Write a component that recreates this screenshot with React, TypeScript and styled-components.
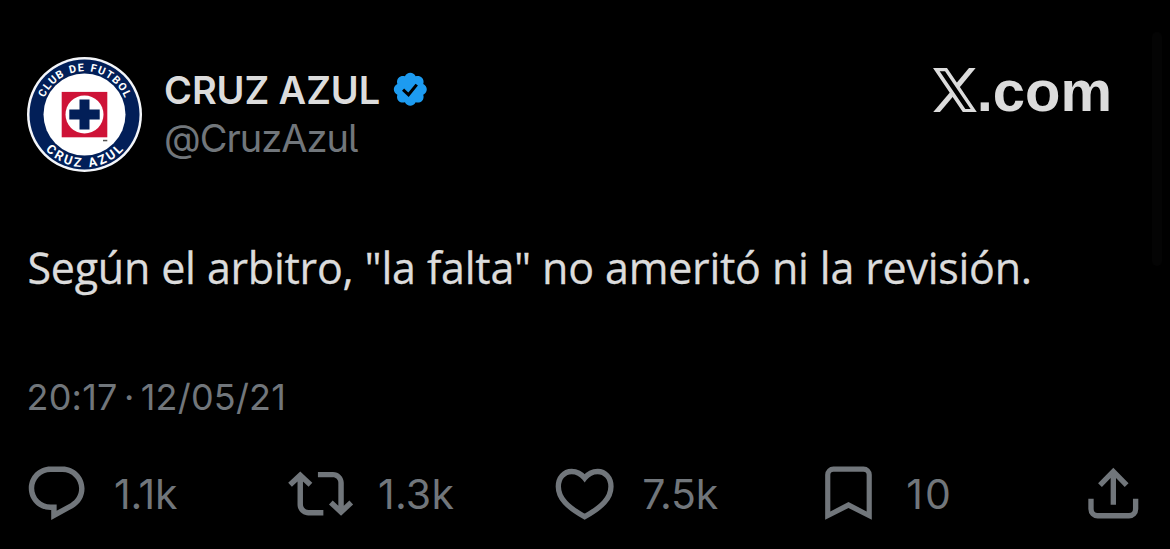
import React from "react";
import styled, { createGlobalStyle } from "styled-components";

const GlobalStyle = createGlobalStyle`
  body { margin: 0; background: #000; }
  * { box-sizing: border-box; }
`;

const Page = styled.main`
  width: 1170px;
  height: 549px;
  display: flex;
  background: #000;
  overflow: hidden;
  font-family: Inter, "Liberation Sans", sans-serif;
`;

const Post = styled.article`
  width: 1152px;
  display: flex;
  flex-direction: column;
  padding-top: 57px;
`;

const ScrollThumb = styled.div`
  width: 10px;
  height: 234px;
  margin-top: 32px;
  border-radius: 5px;
  background: #040404;
`;

const Header = styled.header`
  display: flex;
  height: 115px;
  padding-left: 27px;
  padding-right: 40px;
`;

const Identity = styled.div`
  display: flex;
  flex-direction: column;
  margin-left: 22px;
  padding-top: 9px;
  flex: 1;
`;

const NameRow = styled.div`
  display: flex;
  align-items: center;
  height: 48px;
`;

const Line = styled.span<{ $size: number; $color: string; $weight?: number; $spacing?: number }>`
  font-size: ${(p) => p.$size}px;
  line-height: 48px;
  font-weight: ${(p) => p.$weight ?? 400};
  letter-spacing: ${(p) => p.$spacing ?? 0}px;
  color: ${(p) => p.$color};
  white-space: nowrap;
`;

const Handle = styled(Line)`
  font-feature-settings: "cv05";
`;

const StampText = styled(Line)`
  word-spacing: -4px;
`;

const Brand = styled.div`
  display: flex;
  align-items: flex-start;
  padding-top: 10.5px;
`;

const BrandText = styled.span`
  font: 700 58px/64px "Liberation Sans", sans-serif;
  color: #dcdcdc;
  margin-top: -9px;
`;

const Message = styled.p`
  margin: 66px 0 0 27.5px;
  height: 60px;
  font: 400 43px/60px "Open Sans", sans-serif;
  letter-spacing: -0.26px;
  word-spacing: 0.3px;
  -webkit-text-stroke: 0.3px #dcdcdc;
  color: #dcdcdc;
  white-space: nowrap;
`;

const Stamp = styled.div`
  margin: 75px 0 0 26.5px;
  height: 48px;
  display: flex;
`;

const Actions = styled.footer`
  display: grid;
  grid-template-columns: repeat(4, 264.1px) 65.3px;
  margin: 40px 0 0 24.2px;
  color: #71767b;
`;

const Action = styled.div`
  display: flex;
  align-items: center;
  height: 65.3px;
  gap: 24.500px;
`;

const Glyph = styled.svg`
  width: 65.3px;
  height: 65.3px;
  flex: none;
  display: block;
`;

function Crest() {
  return (
    <svg width="115" height="115" viewBox="-57.5 -57.5 115 115">
      <circle r="57.5" fill="#f4f6fa" />
      <circle r="55" fill="#021f58" />
      <circle r="41" fill="#fff" />
      <rect x="-22.8" y="-22.6" width="45.6" height="45.4" fill="#ce1337" />
      <circle r="19" fill="#fff" />
      <path d="M-5-15H5V-5H15.2V5H5V15H-5V5H-15.2V-5H-5Z" fill="#021f58" />
      <rect x="18.5" y="25.3" width="4.3" height="1.5" fill="#555" />
      <path id="arcTop" d="M-43.4 0A43.4 43.4 0 0 1 43.4 0" fill="none" />
      <path id="arcBottom" d="M-52.6 0A52.6 52.6 0 0 0 52.6 0" fill="none" />
      <g fill="#fff" fontFamily="Roboto, 'Liberation Sans', sans-serif" fontWeight="700" textAnchor="middle">
        <text fontSize="10.8" letterSpacing="1.15" wordSpacing="1">
          <textPath href="#arcTop" startOffset="50.5%">CLUB DE FUTBOL</textPath>
        </text>
        <text fontSize="12.8" letterSpacing="2.5">
          <textPath href="#arcBottom" startOffset="50.8%">CRUZ AZUL</textPath>
        </text>
      </g>
    </svg>
  );
}

const BadgeSvg = styled.svg`
  margin: -1px 0 0 10.5px;
  flex: none;
`;

function Verified() {
  return (
    <BadgeSvg width="38.6" height="38.6" viewBox="0 0 24 24">
      <path
        fill="#1d9bf0"
        d="M22.25 12c0-1.43-.88-2.67-2.19-3.34.46-1.39.2-2.9-.81-3.91s-2.52-1.27-3.91-.81c-.66-1.31-1.91-2.19-3.34-2.19s-2.67.88-3.33 2.19c-1.4-.46-2.91-.2-3.92.81s-1.26 2.52-.8 3.91c-1.31.67-2.2 1.91-2.2 3.34s.89 2.67 2.2 3.34c-.46 1.39-.21 2.9.8 3.91s2.52 1.26 3.91.81c.67 1.31 1.91 2.19 3.34 2.19s2.68-.88 3.34-2.19c1.39.45 2.9.2 3.91-.81s1.27-2.52.81-3.91c1.31-.67 2.19-1.91 2.19-3.34z"
      />
      <path d="M7.5 12.2l3.4 3.2 5.1-6.3" fill="none" stroke="#000" strokeWidth="1.9" />
    </BadgeSvg>
  );
}

const XMark = () => (
  <svg width="44" height="44.3" viewBox="0 0 132 133" fill="#dcdcdc">
    <path fillRule="evenodd" d="M0 0H42L132 133H90ZM20 10L97 123H113L36 10Z" />
    <path d="M108 0H128L79 59L70 46Z" />
    <path d="M0 133H20L64 81L55 68Z" />
  </svg>
);

const ReplyIcon = () => (
  <Glyph viewBox="0 0 24 24" fill="currentColor">
    <path d="M1.751 10c0-4.42 3.584-8 8.005-8h4.366c4.49 0 8.129 3.64 8.129 8.13 0 2.96-1.607 5.68-4.196 7.11l-8.054 4.46v-3.69h-.067c-4.49.1-8.183-3.51-8.183-8.01zm8.005-6c-3.317 0-6.005 2.69-6.005 6 0 3.37 2.77 6.08 6.138 6.01l.351-.01h1.761v2.3l5.087-2.81c1.951-1.08 3.163-3.13 3.163-5.36 0-3.39-2.744-6.13-6.129-6.13H9.756z" />
  </Glyph>
);

const RepostIcon = () => (
  <Glyph viewBox="0 0 24 24" fill="currentColor">
    <path d="M4.5 3.88l4.432 4.14-1.364 1.46L5.5 7.55V16c0 1.1.896 2 2 2H13v2H7.5c-2.209 0-4-1.79-4-4V7.55L1.432 9.48.068 8.02 4.5 3.88zM16.5 6H11V4h5.5c2.209 0 4 1.79 4 4v8.45l2.068-1.93 1.364 1.46-4.432 4.14-4.432-4.14 1.364-1.46 2.068 1.93V8c0-1.1-.896-2-2-2z" />
  </Glyph>
);

const LikeIcon = () => (
  <Glyph viewBox="547 18.6 196 196" fill="none" stroke="currentColor" strokeWidth="16">
    <path d="M645 70C634 56 620 50 606 50C583 50 566 69 566 95C566 131 594 157 645 186C696 157 724 131 724 95C724 69 707 50 684 50C670 50 656 56 645 70Z" />
  </Glyph>
);

const SaveIcon = () => (
  <Glyph viewBox="49.5 18.6 196 196" fill="currentColor" fillRule="evenodd">
    <path d="M77 195V60A25 25 0 0 1 102 35H192A25 25 0 0 1 217 60V195L147 160ZM92.500 170L147 142L201.500 170V60A9.500 9.500 0 0 0 192 50.500H102A9.500 9.500 0 0 0 92.500 60Z" />
  </Glyph>
);

const ShareIcon = () => (
  <Glyph viewBox="842 18.6 196 196" fill="none" stroke="currentColor" strokeWidth="16">
    <path d="M939 150V50M899 91L939 50L979 91M872 132V163A20 20 0 0 0 892 183H986A20 20 0 0 0 1006 163V132" />
  </Glyph>
);

const stats = [
  { icon: <ReplyIcon />, value: "1.1k", spacing: -0.2 },
  { icon: <RepostIcon />, value: "1.3k", spacing: 0.2 },
  { icon: <LikeIcon />, value: "7.5k", spacing: -0.2 },
  { icon: <SaveIcon />, value: "10", spacing: 2 },
  { icon: <ShareIcon />, value: "", spacing: 0 },
];

export default function App() {
  return (
    <Page>
      <GlobalStyle />
      <Post>
        <Header>
          <Crest />
          <Identity>
            <NameRow>
              <Line $size={38} $weight={600} $color="#dcdcdc" $spacing={-0.1}>CRUZ AZUL</Line>
              <Verified />
            </NameRow>
            <Handle $size={38} $color="#71767b" $spacing={-1}>@CruzAzul</Handle>
          </Identity>
          <Brand>
            <XMark />
            <BrandText>.com</BrandText>
          </Brand>
        </Header>
        <Message>Según el arbitro, "la falta" no ameritó ni la revisión.</Message>
        <Stamp>
          <StampText $size={36} $color="#71767b" $spacing={0.2}>20:17 · 12/05/21</StampText>
        </Stamp>
        <Actions>
          {stats.map((s, i) => (
            <Action key={i}>
              {s.icon}
              {s.value && (
                <Line $size={41} $color="#71767b" $spacing={s.spacing}>{s.value}</Line>
              )}
            </Action>
          ))}
        </Actions>
      </Post>
      <ScrollThumb />
    </Page>
  );
}
